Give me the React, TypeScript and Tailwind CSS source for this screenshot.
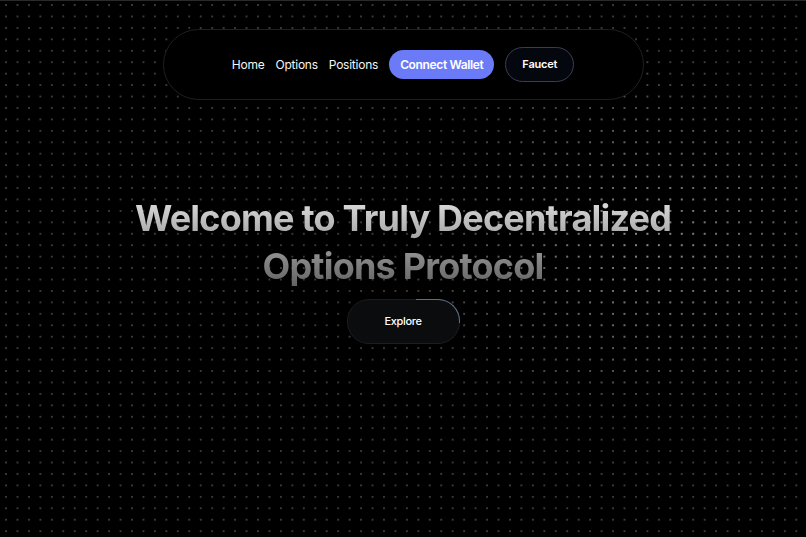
import React from 'react';

const navLinks = ['Home', 'Options', 'Positions'];

const App: React.FC = () => {
  return (
    <div
      className="relative min-h-[537px] w-full overflow-hidden bg-black border-t border-[#2a2a2a] text-white"
      style={{ fontFamily: 'Inter, "Noto Sans", sans-serif' }}
    >
      {/* dotted grid */}
      <div className="pointer-events-none absolute inset-0 bg-[radial-gradient(circle,#3a3a3a_0.9px,transparent_1.3px)] bg-[size:11.46px_11.45px] bg-[position:0.3px_-1.7px]" />
      {/* spotlight on the grid */}
      <div className="pointer-events-none absolute inset-0 bg-[radial-gradient(circle,#8a8a8a_0.9px,transparent_1.3px)] bg-[size:11.46px_11.45px] bg-[position:0.3px_-1.7px] [mask-image:radial-gradient(ellipse_240px_190px_at_80%_45%,black,transparent)]" />

      <div className="relative flex flex-col items-center">
        <nav className="mt-[28px] flex h-[71px] w-[481px] items-center justify-center gap-[11px] rounded-full border border-[#1f1f24] bg-black">
          {navLinks.map((link) => (
            <a key={link} href="#" className="text-[12px] tracking-[-0.02em] text-neutral-100">
              {link}
            </a>
          ))}
          <button className="h-[29px] rounded-full bg-[#6b7bf7] px-[11px] text-[12px] font-semibold tracking-[-0.03em] text-white">
            Connect Wallet
          </button>
          <button className="h-[35px] rounded-full border border-[#3a3d52] bg-[#05070f] px-[16px] text-[11px] font-semibold tracking-[-0.02em] text-white">
            Faucet
          </button>
        </nav>

        <h1 className="mt-[94px] bg-linear-to-b from-[#e6e6e6] to-[#5e5e5e] bg-clip-text text-center text-[36px] font-bold leading-[48px] tracking-[-0.022em] text-transparent">
          Welcome to Truly Decentralized
          <br />
          Options Protocol
        </h1>

        <button className="relative mt-[9px] h-[45px] w-[113px] rounded-[22px] border border-[#1c1d22] bg-[#0b0c0e] text-[11px] font-medium tracking-[-0.03em] text-white">
          <span className="pointer-events-none absolute -right-px -top-px h-[24px] w-[44px] rounded-tr-[22px] border-r border-t border-[#5a7088]" />
          Explore
        </button>
      </div>
    </div>
  );
};

export default App;
